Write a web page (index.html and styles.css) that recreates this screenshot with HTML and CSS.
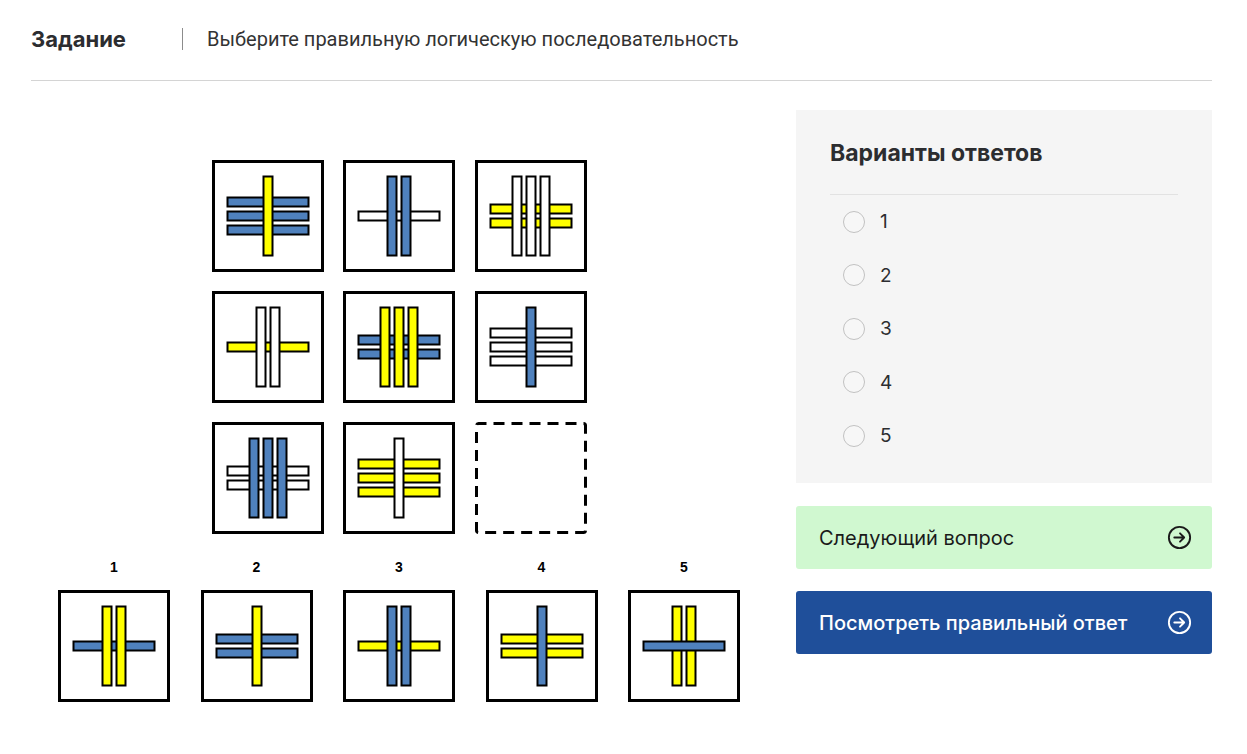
FILE: index.html
```html
<!DOCTYPE html>
<html lang="ru">
<head>
<meta charset="utf-8">
<title>Задание</title>
<link rel="stylesheet" href="styles.css">
</head>
<body>
<div class="page">
  <header class="header">
    <h1 class="header-title">Задание</h1>
    <span class="header-sep"></span>
    <p class="header-task">Выберите правильную логическую последовательность</p>
  </header>

  <main class="main">
    <section class="puzzle">
      <div class="matrix">
        <!-- r1c1 -->
        <svg class="cell" viewBox="0 0 112 112">
          <rect class="frame" x="1.5" y="1.5" width="109" height="109"/>
          <rect class="bar blue" x="15.5" y="37.5" width="81" height="9"/>
          <rect class="bar blue" x="15.5" y="51.5" width="81" height="9"/>
          <rect class="bar blue" x="15.5" y="65.5" width="81" height="9"/>
          <rect class="bar yellow" x="51.5" y="16.5" width="9" height="79"/>
        </svg>
        <!-- r1c2 -->
        <svg class="cell" viewBox="0 0 112 112">
          <rect class="frame" x="1.5" y="1.5" width="109" height="109"/>
          <rect class="bar white" x="15.5" y="51.5" width="81" height="9"/>
          <rect class="bar blue" x="44.5" y="16.5" width="9" height="79"/>
          <rect class="bar blue" x="58.5" y="16.5" width="9" height="79"/>
        </svg>
        <!-- r1c3 -->
        <svg class="cell" viewBox="0 0 112 112">
          <rect class="frame" x="1.5" y="1.5" width="109" height="109"/>
          <rect class="bar yellow" x="15.5" y="44.5" width="81" height="9"/>
          <rect class="bar yellow" x="15.5" y="58.5" width="81" height="9"/>
          <rect class="bar white" x="37.5" y="16.5" width="9" height="79"/>
          <rect class="bar white" x="51.5" y="16.5" width="9" height="79"/>
          <rect class="bar white" x="65.5" y="16.5" width="9" height="79"/>
        </svg>
        <!-- r2c1 -->
        <svg class="cell" viewBox="0 0 112 112">
          <rect class="frame" x="1.5" y="1.5" width="109" height="109"/>
          <rect class="bar yellow" x="15.5" y="51.5" width="81" height="9"/>
          <rect class="bar white" x="44.5" y="16.5" width="9" height="79"/>
          <rect class="bar white" x="58.5" y="16.5" width="9" height="79"/>
        </svg>
        <!-- r2c2 -->
        <svg class="cell" viewBox="0 0 112 112">
          <rect class="frame" x="1.5" y="1.5" width="109" height="109"/>
          <rect class="bar blue" x="15.5" y="44.5" width="81" height="9"/>
          <rect class="bar blue" x="15.5" y="58.5" width="81" height="9"/>
          <rect class="bar yellow" x="37.5" y="16.5" width="9" height="79"/>
          <rect class="bar yellow" x="51.5" y="16.5" width="9" height="79"/>
          <rect class="bar yellow" x="65.5" y="16.5" width="9" height="79"/>
        </svg>
        <!-- r2c3 -->
        <svg class="cell" viewBox="0 0 112 112">
          <rect class="frame" x="1.5" y="1.5" width="109" height="109"/>
          <rect class="bar white" x="15.5" y="37.5" width="81" height="9"/>
          <rect class="bar white" x="15.5" y="51.5" width="81" height="9"/>
          <rect class="bar white" x="15.5" y="65.5" width="81" height="9"/>
          <rect class="bar blue" x="51.5" y="16.5" width="9" height="79"/>
        </svg>
        <!-- r3c1 -->
        <svg class="cell" viewBox="0 0 112 112">
          <rect class="frame" x="1.5" y="1.5" width="109" height="109"/>
          <rect class="bar white" x="15.5" y="44.5" width="81" height="9"/>
          <rect class="bar white" x="15.5" y="58.5" width="81" height="9"/>
          <rect class="bar blue" x="37.5" y="16.5" width="9" height="79"/>
          <rect class="bar blue" x="51.5" y="16.5" width="9" height="79"/>
          <rect class="bar blue" x="65.5" y="16.5" width="9" height="79"/>
        </svg>
        <!-- r3c2 -->
        <svg class="cell" viewBox="0 0 112 112">
          <rect class="frame" x="1.5" y="1.5" width="109" height="109"/>
          <rect class="bar yellow" x="15.5" y="37.5" width="81" height="9"/>
          <rect class="bar yellow" x="15.5" y="51.5" width="81" height="9"/>
          <rect class="bar yellow" x="15.5" y="65.5" width="81" height="9"/>
          <rect class="bar white" x="51.5" y="16.5" width="9" height="79"/>
        </svg>
        <!-- r3c3 empty -->
        <svg class="cell" viewBox="0 0 112 112">
          <rect class="frame-dashed" x="1.5" y="1.5" width="109" height="109" rx="2"/>
        </svg>
      </div>

      <div class="choices">
        <figure class="choice">
          <figcaption class="choice-num">1</figcaption>
          <svg class="cell" viewBox="0 0 112 112">
            <rect class="frame" x="1.5" y="1.5" width="109" height="109"/>
            <rect class="bar blue" x="15.5" y="51.5" width="81" height="9"/>
            <rect class="bar yellow" x="44.5" y="16.5" width="9" height="79"/>
            <rect class="bar yellow" x="58.5" y="16.5" width="9" height="79"/>
          </svg>
        </figure>
        <figure class="choice">
          <figcaption class="choice-num">2</figcaption>
          <svg class="cell" viewBox="0 0 112 112">
            <rect class="frame" x="1.5" y="1.5" width="109" height="109"/>
            <rect class="bar blue" x="15.5" y="44.5" width="81" height="9"/>
            <rect class="bar blue" x="15.5" y="58.5" width="81" height="9"/>
            <rect class="bar yellow" x="51.5" y="16.5" width="9" height="79"/>
          </svg>
        </figure>
        <figure class="choice">
          <figcaption class="choice-num">3</figcaption>
          <svg class="cell" viewBox="0 0 112 112">
            <rect class="frame" x="1.5" y="1.5" width="109" height="109"/>
            <rect class="bar yellow" x="15.5" y="51.5" width="81" height="9"/>
            <rect class="bar blue" x="44.5" y="16.5" width="9" height="79"/>
            <rect class="bar blue" x="58.5" y="16.5" width="9" height="79"/>
          </svg>
        </figure>
        <figure class="choice">
          <figcaption class="choice-num">4</figcaption>
          <svg class="cell" viewBox="0 0 112 112">
            <rect class="frame" x="1.5" y="1.5" width="109" height="109"/>
            <rect class="bar yellow" x="15.5" y="44.5" width="81" height="9"/>
            <rect class="bar yellow" x="15.5" y="58.5" width="81" height="9"/>
            <rect class="bar blue" x="51.5" y="16.5" width="9" height="79"/>
          </svg>
        </figure>
        <figure class="choice">
          <figcaption class="choice-num">5</figcaption>
          <svg class="cell" viewBox="0 0 112 112">
            <rect class="frame" x="1.5" y="1.5" width="109" height="109"/>
            <rect class="bar yellow" x="44.5" y="16.5" width="9" height="79"/>
            <rect class="bar yellow" x="58.5" y="16.5" width="9" height="79"/>
            <rect class="bar blue" x="15.5" y="51.5" width="81" height="9"/>
          </svg>
        </figure>
      </div>
    </section>

    <aside class="side">
      <div class="panel">
        <h2 class="panel-title">Варианты ответов</h2>
        <ul class="options">
          <li class="option"><span class="radio"></span><span class="option-label">1</span></li>
          <li class="option"><span class="radio"></span><span class="option-label">2</span></li>
          <li class="option"><span class="radio"></span><span class="option-label">3</span></li>
          <li class="option"><span class="radio"></span><span class="option-label">4</span></li>
          <li class="option"><span class="radio"></span><span class="option-label">5</span></li>
        </ul>
      </div>
      <button class="btn btn-next" type="button">
        <span>Следующий вопрос</span>
        <svg class="btn-icon" viewBox="0 0 24 24"><circle cx="12" cy="12" r="10.2"/><path d="M7 12h9.5M12.5 8l4 4-4 4"/></svg>
      </button>
      <button class="btn btn-answer" type="button">
        <span>Посмотреть правильный ответ</span>
        <svg class="btn-icon" viewBox="0 0 24 24"><circle cx="12" cy="12" r="10.2"/><path d="M7 12h9.5M12.5 8l4 4-4 4"/></svg>
      </button>
    </aside>
  </main>
</div>
</body>
</html>
```

FILE: styles.css
```css
* { box-sizing: border-box; }

html, body {
  margin: 0;
  padding: 0;
  background: #ffffff;
}

body {
  font-family: Inter, "Open Sans", "Noto Sans", sans-serif;
  color: #2c2d30;
}

.page {
  padding: 0 35px 0 31px;
}

.header {
  display: flex;
  align-items: center;
  height: 81px;
  border-bottom: 1px solid #d4d4d4;
  padding-bottom: 2px;
}

.header-title {
  margin: 0;
  font-size: 22px;
  font-weight: 700;
  color: #2c2d30;
  width: 151px;
}

.header-sep {
  width: 1px;
  height: 22px;
  background: #8c8c8c;
}

.header-task {
  margin: 0 0 0 24px;
  font-family: Roboto, "Liberation Sans", sans-serif;
  font-size: 20px;
  font-weight: 400;
  color: #333333;
}

.main {
  display: flex;
  gap: 29px;
  margin-top: 29px;
}

.puzzle {
  width: 736px;
  flex: none;
  display: flex;
  flex-direction: column;
  align-items: center;
  padding-top: 50px;
}

.matrix {
  display: grid;
  grid-template-columns: repeat(3, 112px);
  column-gap: 19.5px;
  row-gap: 19px;
}

.cell {
  display: block;
  width: 112px;
  height: 112px;
}

.frame {
  fill: #ffffff;
  stroke: #000000;
  stroke-width: 3;
}

.frame-dashed {
  fill: #ffffff;
  stroke: #000000;
  stroke-width: 3;
  stroke-dasharray: 11 7;
  stroke-dashoffset: 3;
}

.bar {
  stroke: #000000;
  stroke-width: 2;
}

.blue { fill: #4f81bd; }
.yellow { fill: #ffff00; }
.white { fill: #ffffff; }

.choices {
  display: flex;
  gap: 30.5px;
  margin-top: 25px;
}

.choice {
  margin: 0;
  display: flex;
  flex-direction: column;
  align-items: center;
}

.choice-num {
  font-family: "Liberation Sans", Arial, sans-serif;
  font-weight: 700;
  font-size: 14px;
  line-height: 16px;
  color: #000000;
  margin-bottom: 15px;
}

.side {
  width: 416px;
  flex: none;
  display: flex;
  flex-direction: column;
}

.panel {
  background: #f5f5f5;
  padding: 28px 34px 0;
  height: 373px;
}

.panel-title {
  margin: 0;
  font-size: 23px;
  line-height: 30px;
  font-weight: 700;
  color: #2c2d30;
  padding-bottom: 26px;
  border-bottom: 1px solid #e2e2e2;
}

.options {
  list-style: none;
  margin: 0;
  padding: 0;
}

.option {
  display: flex;
  align-items: center;
  height: 53.5px;
  padding-left: 13px;
}

.radio {
  width: 22px;
  height: 22px;
  border: 1.5px solid #c2c2c2;
  border-radius: 50%;
  background: #f7f7f7;
  margin-right: 15px;
}

.option-label {
  font-size: 19px;
  color: #2c2d30;
}

.btn {
  display: flex;
  align-items: center;
  justify-content: space-between;
  width: 100%;
  height: 63px;
  border: none;
  border-radius: 3px;
  padding: 0 20px 0 23px;
  font-family: Inter, "Open Sans", sans-serif;
  font-size: 20px;
  font-weight: 500;
  text-align: left;
  cursor: pointer;
}

.btn-next {
  margin-top: 23px;
  background: #d0f8d0;
  color: #1a1a1a;
  font-weight: 400;
}

.btn-answer {
  margin-top: 22px;
  background: #1f4f9a;
  color: #ffffff;
}

.btn-icon {
  width: 25px;
  height: 25px;
  fill: none;
  stroke: currentColor;
  stroke-width: 1.8;
  stroke-linecap: round;
  stroke-linejoin: round;
}
```
